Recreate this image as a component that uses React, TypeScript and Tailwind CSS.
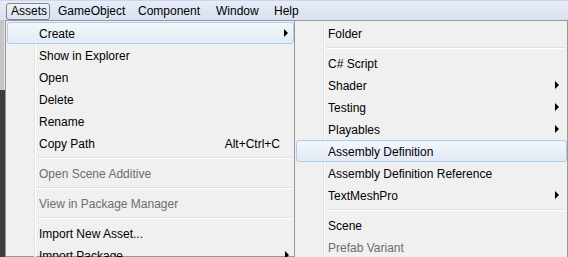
import React from "react"

type Item =
  | { kind: "sep" }
  | { kind: "item"; label: string; shortcut?: string; sub?: boolean; disabled?: boolean; active?: boolean }

const assetsMenu: Item[] = [
  { kind: "item", label: "Create", sub: true, active: true },
  { kind: "item", label: "Show in Explorer" },
  { kind: "item", label: "Open" },
  { kind: "item", label: "Delete" },
  { kind: "item", label: "Rename" },
  { kind: "item", label: "Copy Path", shortcut: "Alt+Ctrl+C" },
  { kind: "sep" },
  { kind: "item", label: "Open Scene Additive", disabled: true },
  { kind: "sep" },
  { kind: "item", label: "View in Package Manager", disabled: true },
  { kind: "sep" },
  { kind: "item", label: "Import New Asset..." },
  { kind: "item", label: "Import Package", sub: true },
]

const createMenu: Item[] = [
  { kind: "item", label: "Folder" },
  { kind: "sep" },
  { kind: "item", label: "C# Script" },
  { kind: "item", label: "Shader", sub: true },
  { kind: "item", label: "Testing", sub: true },
  { kind: "item", label: "Playables", sub: true },
  { kind: "item", label: "Assembly Definition", active: true },
  { kind: "item", label: "Assembly Definition Reference" },
  { kind: "item", label: "TextMeshPro", sub: true },
  { kind: "sep" },
  { kind: "item", label: "Scene" },
  { kind: "item", label: "Prefab Variant", disabled: true },
]

function Arrow() {
  return (
    <svg width="4" height="8" viewBox="0 0 4 8" className="shrink-0">
      <polygon points="0,0 4,4 0,8" fill="#000" />
    </svg>
  )
}

function Gutter() {
  return (
    <div className="flex h-full shrink-0">
      <div className="w-[28px]" />
      <div className="w-px bg-[#e2e3e3]" />
      <div className="w-px bg-white" />
    </div>
  )
}

function Menu({ items, arrowPad }: { items: Item[]; arrowPad: string }) {
  return (
    <div className="flex flex-col">
      {items.map((it, i) =>
        it.kind === "sep" ? (
          <div key={i} className="flex h-[8px] items-center">
            <Gutter />
            <div className="flex-1 flex flex-col ml-[1px] mr-[2px]">
              <div className="h-px bg-[#e0e0e0]" />
              <div className="h-px bg-white" />
            </div>
          </div>
        ) : it.active ? (
          <div
            key={i}
            className={`flex h-[22px] items-center ml-[1px] rounded-[3px] border border-[#aecbf0] bg-gradient-to-b from-[#f3f6fb] to-[#e2eaf6] ${arrowPad}`}
          >
            <div className="w-[29px] shrink-0" />
            <span className="pl-[2px] flex-1 h-[20px] leading-[22px] text-black">{it.label}</span>
            {it.sub && <Arrow />}
          </div>
        ) : (
          <div key={i} className={`flex h-[22px] items-center ${arrowPad}`}>
            <Gutter />
            <span className={`pl-[3px] flex-1 h-[22px] leading-[24px] ${it.disabled ? "text-[#6d6d6d]" : "text-black"}`}>
              {it.label}
            </span>
            {it.shortcut && <span className="mr-[9px] h-[22px] leading-[24px] text-black">{it.shortcut}</span>}
            {it.sub && <Arrow />}
          </div>
        )
      )}
    </div>
  )
}

export default function App() {
  const bar = ["GameObject", "Component", "Window", "Help"]
  const widths = ["w-[78px]", "w-[76px]", "w-[56px]", "w-[40px]"]

  return (
    <div
      className="w-[568px] h-[257px] overflow-hidden bg-[#f0f0f0] flex flex-col text-[12px] leading-[22px]"
      style={{ fontFamily: "'Liberation Sans', Arial, sans-serif" }}
    >
      {/* menu bar */}
      <div className="h-[20px] shrink-0 flex items-start border-t border-[#c9d6ec] bg-gradient-to-b from-[#e6ecf6] to-[#d8e1f0]">
        <div className="ml-[6px] mt-[2px] h-[17px] w-[44px] rounded-[3px] border border-[#7f8694] bg-gradient-to-b from-[#eef2f8] to-[#dbe3f1] pl-[4px] leading-[15px] text-black">
          Assets
        </div>
        {bar.map((b, i) => (
          <div key={b} className={`mt-[2px] h-[17px] ${widths[i]} ml-[2px] pl-[6px] leading-[17px] text-black`}>
            {b}
          </div>
        ))}
      </div>

      <div className="flex flex-1 min-h-0">
        {/* editor behind */}
        <div className="w-[5px] shrink-0 flex flex-col">
          <div className="h-[70px] bg-[#c6c6c6] border-r border-[#e6e6e6]" />
          <div className="flex-1 bg-[#3e3e3e]" />
        </div>

        {/* Assets menu */}
        <div className="w-[290px] shrink-0 border border-[#979797] bg-[#f0f0f0] pt-[1px]">
          <Menu items={assetsMenu} arrowPad="pr-[5px]" />
        </div>

        {/* Create submenu */}
        <div className="w-[273px] shrink-0 border-t border-r border-[#979797] bg-[#f0f0f0] pt-[1px]">
          <Menu items={createMenu} arrowPad="pr-[8px]" />
        </div>
      </div>
    </div>
  )
}
